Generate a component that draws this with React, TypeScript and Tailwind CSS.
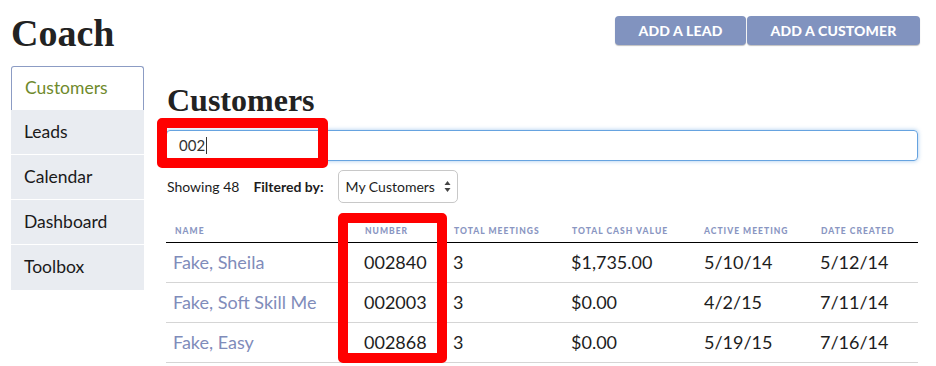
import React from "react";

const sans = "font-['Lato','Open_Sans',sans-serif]";
const serif = "font-['Liberation_Serif','Times_New_Roman',serif]";

const rows = [
  { name: "Fake, Sheila", num: "002840", meet: "3", cash: "$1,735.00", active: "5/10/14", created: "5/12/14" },
  { name: "Fake, Soft Skill Me", num: "002003", meet: "3", cash: "$0.00", active: "4/2/15", created: "7/11/14" },
  { name: "Fake, Easy", num: "002868", meet: "3", cash: "$0.00", active: "5/19/15", created: "7/16/14" },
];

const headers = ["Name", "Number", "Total Meetings", "Total Cash Value", "Active Meeting", "Date Created"];
const cols = "grid grid-cols-[190px_89px_118px_132px_117px_106px]";

export default function App() {
  return (
    <div className={`relative w-[936px] h-[366px] bg-white overflow-hidden ${sans} text-[#1d1d1d]`}>
      <div className="flex justify-between items-start pl-[11px] pr-[16px]">
        <h1 className={`${serif} font-bold text-[38px] leading-none mt-[14px] text-[#222]`}>Coach</h1>
        <div className="flex gap-[1px] mt-[16px]">
          <button className="w-[131px] h-[29px] rounded-[4px] bg-[#8193bf] text-white font-black text-[14px] tracking-[0.01em] shadow-[0_1px_1px_rgba(0,0,0,0.25)]">ADD A LEAD</button>
          <button className="w-[173px] h-[29px] rounded-[4px] bg-[#8193bf] text-white font-black text-[14px] tracking-[0.01em] shadow-[0_1px_1px_rgba(0,0,0,0.25)]">ADD A CUSTOMER</button>
        </div>
      </div>

      <div className="flex mt-[14px] pl-[11px]">
        <nav className="w-[133px] flex flex-col">
          <div className="h-[44px] flex items-center pl-[13px] text-[17.5px] text-[#6f8a2c] bg-white border border-b-0 border-[#8c9cc4] rounded-t-[3px]">Customers</div>
          {["Leads", "Calendar", "Dashboard", "Toolbox"].map((t, i) => (
            <div key={t} className={`h-[45px] flex items-center pl-[13px] text-[17.5px] text-[#1a1a1a] bg-[#e9ecf1] ${i < 3 ? "border-b border-white" : ""}`}>{t}</div>
          ))}
        </nav>

        <main className="ml-[22px] w-[752px]">
          <h2 className={`${serif} font-bold text-[32px] leading-none mt-[18px] pl-[1px] text-[#222]`}>Customers</h2>
          <div className="mt-[14px] h-[31px] rounded-[4px] border border-[#66a3e0] shadow-[0_0_4px_rgba(102,163,224,0.6)] flex items-center pl-[12px] text-[15px] text-[#333]">
            002<span className="inline-block w-[1px] h-[17px] bg-[#333] ml-[1px]" />
          </div>
          <div className="flex items-center mt-[9px] text-[14px]">
            <span className="pl-[1px]">Showing 48</span>
            <span className="ml-[14px] font-bold">Filtered by:</span>
            <div className="ml-[14px] w-[120px] h-[33px] rounded-[5px] border border-[#c8c8c8] flex items-center justify-between pl-[7px] pr-[6px]">
              <span>My Customers</span>
              <svg width="7" height="13" viewBox="0 0 7 13"><path d="M3.5 1 L6.5 5 H0.5 Z M3.5 12 L6.5 8 H0.5 Z" fill="#444" /></svg>
            </div>
          </div>

          <div className="mt-[18px]">
            <div className={`${cols} h-[22px] items-center border-b border-black`}>
              {headers.map((h) => (
                <div key={h} className="pl-[9px] text-[8.5px] font-black uppercase tracking-[0.12em] text-[#8a96c2]">{h}</div>
              ))}
            </div>
            {rows.map((r) => (
              <div key={r.num} className={`${cols} h-[40px] items-center border-b border-[#d5d5d5] text-[18px]`}>
                <div className="pl-[7px] text-[#7f8cba]">{r.name}</div>
                <div className="pl-[8px]">{r.num}</div>
                <div className="pl-[8px]">{r.meet}</div>
                <div className="pl-[8px]">{r.cash}</div>
                <div className="pl-[9px]">{r.active}</div>
                <div className="pl-[8px]">{r.created}</div>
              </div>
            ))}
          </div>
        </main>
      </div>

      <div className="absolute left-[157px] top-[118px] w-[171px] h-[50px] border-[10px] border-[#ff0000] rounded-[5px]" />
      <div className="absolute left-[338px] top-[213px] w-[109px] h-[150px] border-[10px] border-[#ff0000] rounded-[5px]" />
    </div>
  );
}
